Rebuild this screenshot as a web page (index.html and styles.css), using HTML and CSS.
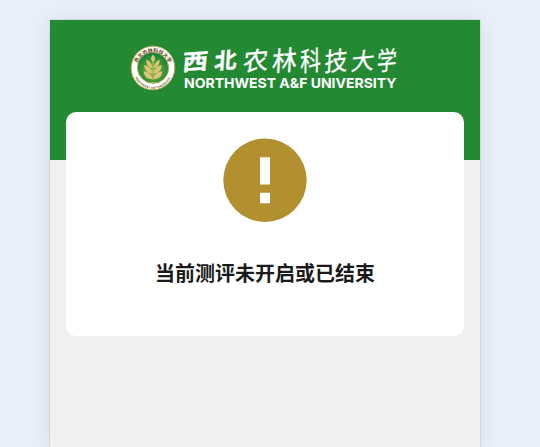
FILE: index.html
```html
<!DOCTYPE html>
<html lang="zh-CN">
<head>
<meta charset="utf-8">
<title>西北农林科技大学</title>
<link rel="stylesheet" href="styles.css">
</head>
<body>
<main class="page">
  <header class="banner">
    <svg class="logo" width="274" height="60" viewBox="128 38 274 60">
      <defs>
        <radialGradient id="field" cx=".5" cy=".6" r=".55"><stop offset="0" stop-color="#7cb928"/><stop offset="1" stop-color="#168338"/></radialGradient>
        <linearGradient id="gold" x2="1" y2="1"><stop offset="0" stop-color="#a88233"/><stop offset=".5" stop-color="#e9d38c"/><stop offset="1" stop-color="#9b7027"/></linearGradient>
        <path id="arc-top" d="M136.6 68.5a16.4 16.4 0 0 1 32.8 0"/>
        <path id="arc-bottom" d="M133.2 69a19.8 19.8 0 0 0 39.6 0"/>
      </defs>
      <circle cx="153" cy="68" r="21.8" fill="#fff" stroke="url(#gold)" stroke-width="1"/>
      <circle cx="153" cy="67.8" r="15.6" fill="url(#field)" stroke="url(#gold)" stroke-width=".9"/>
      <g fill="#dcc27c">
        <path d="M153 54.6c2.5 2.4 2.7 5.4 0 8-2.7-2.6-2.5-5.6 0-8z"/>
        <path id="leaf" d="M152.4 68c-4.2-.8-6.4-3.9-6-8.6 3.7 1.8 5.8 4.4 6 8.6zM152.4 73.7c-5-.4-8.1-3.5-8.2-8.6 4.9 1.2 8 4.1 8.2 8.6zM152.4 79.2c-5.2 0-8.6-3-8.8-8 5.2.6 8.6 3.2 8.8 8z"/>
        <use href="#leaf" transform="matrix(-1 0 0 1 306 0)"/>
        <path d="M152.6 62h.8v18h-.8z"/>
      </g>
      <text class="seal-name"><textPath href="#arc-top" startOffset="50%">西北农林科技大学</textPath></text>
      <text class="seal-latin"><textPath href="#arc-bottom" startOffset="50%">NORTHWEST A&amp;F UNIVERSITY</textPath></text>
      <text class="seal-year" x="153" y="82.6">1934</text>
      <g class="name">
        <text class="heavy" transform="translate(194.5 69.5) skewY(-4) skewX(-5) scale(1.12 .96)">西</text>
        <text class="heavy" transform="translate(225 68.5) skewY(-5) skewX(-4) scale(.98 .96)">北</text>
        <text transform="translate(255 70) skewY(-5) skewX(-5) scale(1.1 1.08)">农</text>
        <text transform="translate(284 70.5) skewY(-5) skewX(-3) scale(1.08 1.16)">林</text>
        <text transform="translate(310.5 70.5) skewY(-5) scale(.9 1.16)">科</text>
        <text transform="translate(335.5 70.5) skewY(-5) skewX(-3) scale(1 1.12)">技</text>
        <text transform="translate(362 69.5) skewY(-5) skewX(-6) scale(1 1)">大</text>
        <text transform="translate(386.5 70) skewY(-5) skewX(-3) scale(.86 1.1)">学</text>
      </g>
      <text class="latin" x="184" y="88.3" textLength="212.5" lengthAdjust="spacingAndGlyphs">NORTHWEST A&amp;F UNIVERSITY</text>
    </svg>
  </header>
  <section class="card">
    <svg class="warning" width="84" height="84" viewBox="0 0 84 84">
      <circle cx="42" cy="42.3" r="41.7" fill="#b28f2f"/>
      <path fill="#fff" d="M37 19.3h10v27.3H37zM37 54.8h10v10.5H37z"/>
    </svg>
    <h1 class="message">当前测评未开启或已结束</h1>
  </section>
</main>
</body>
</html>
```

FILE: styles.css
```css
body {
  box-sizing: border-box;
  margin: 0;
  padding: 20px 0 0 50px;
  height: 447px;
  overflow: hidden;
  background: #e8eff9;
  font-family: "Liberation Sans", "Noto Sans CJK SC", sans-serif;
}

.page {
  width: 430px;
  height: 427px;
  background: #f0f0f0;
  box-shadow: 0 0 1px rgba(0, 0, 0, .3), 0 2px 20px rgba(0, 0, 0, .09);
}

.banner {
  box-sizing: border-box;
  height: 140px;
  padding: 18px 0 0 78px;
  background: #238933;
}

.logo {
  display: block;
}

.name text {
  font: 400 23px "Noto Sans CJK SC", sans-serif;
  text-anchor: middle;
  fill: #fff;
  stroke: #fff;
  stroke-width: .3;
}

.name .heavy {
  font-weight: 700;
}

.latin {
  font: 700 13.6px Inter, "Liberation Sans", sans-serif;
  fill: #fff;
}

.seal-name {
  font: 700 5px "Noto Sans CJK SC", sans-serif;
  text-anchor: middle;
  fill: #684a18;
}

.seal-latin {
  font: 700 2.9px "Liberation Sans", sans-serif;
  text-anchor: middle;
  fill: #72541f;
}

.seal-year {
  font: 700 2.4px "Liberation Sans", sans-serif;
  text-anchor: middle;
  fill: #eed79b;
}

.card {
  position: relative;
  box-sizing: border-box;
  display: flex;
  flex-direction: column;
  align-items: center;
  height: 224px;
  margin: -48px 16px 0;
  padding-top: 26px;
  border-radius: 10px;
  background: #fff;
}

.message {
  margin: 36px 0 0;
  font: 700 20px/30px "Noto Sans CJK SC", sans-serif;
  color: #1a1a1a;
}
```
